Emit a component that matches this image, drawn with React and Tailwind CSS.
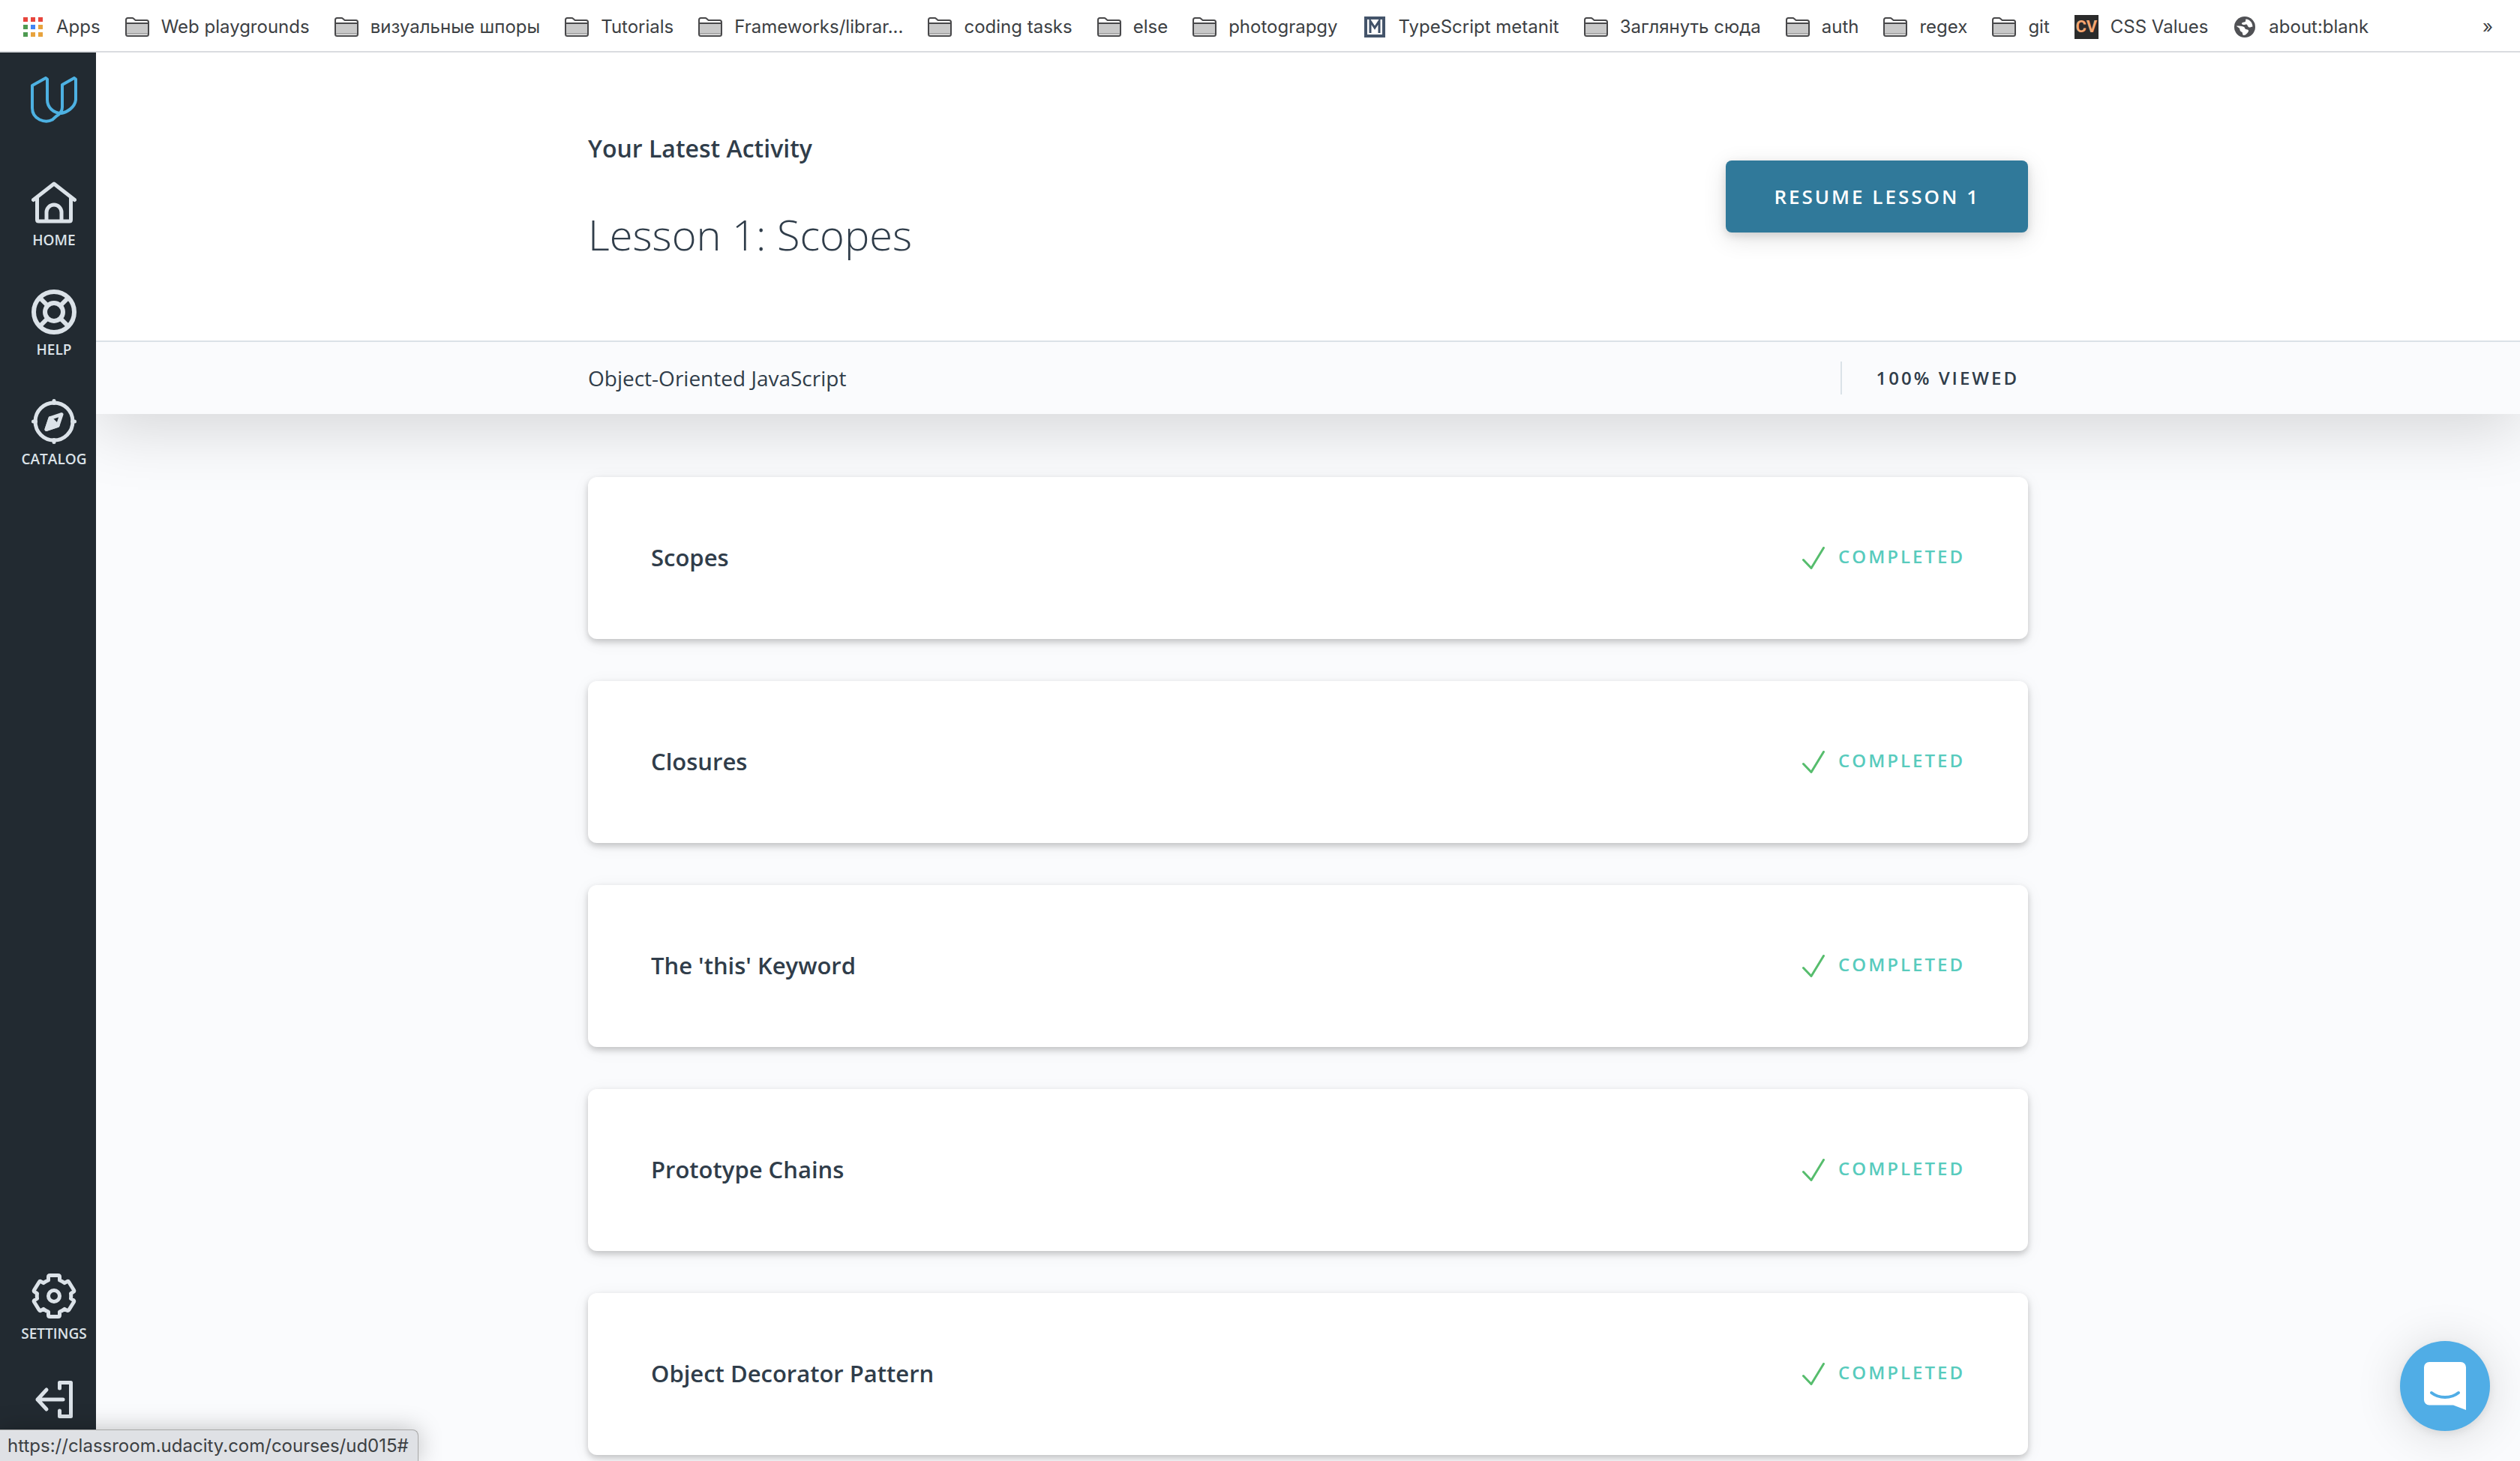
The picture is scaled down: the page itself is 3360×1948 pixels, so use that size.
const folder = (
  <svg viewBox="0 0 32 26" className="h-[26px] w-8 shrink-0" fill="none">
    <path d="M1 3.5C1 2 2 1 3.5 1h5.700c1 0 1.600.4 2.200 1.100L13.600 4H28.500C30 4 31 5 31 6.500V22.500C31 24 30 25 28.500 25H3.500C2 25 1 24 1 22.500Z" fill="#fff" stroke="#48484a" strokeWidth="2" />
    <path d="M2 9h28v14H2z" fill="#c8c8c8" />
    <path d="M2 21h28v2H2z" fill="#a9a9a9" />
    <path d="M2 8h28" stroke="#48484a" strokeWidth="2" />
  </svg>
);

const metanit = (
  <svg viewBox="0 0 32 28" className="h-7 w-8 shrink-0">
    <path d="M2 0h28v28H2z" fill="#44546a" />
    <path d="M6 4h20v20H6z" fill="#fff" />
    <path d="M10 22V6l6 9 6-9v16" fill="none" stroke="#3f5068" strokeWidth="3" />
  </svg>
);

const cssValues = (
  <span className="flex size-8 shrink-0 items-center justify-center bg-[#2b2b2b] font-['Roboto',sans-serif] text-[22px] leading-8 font-bold text-[#f5a671]">
    CV
  </span>
);

const globe = (
  <svg viewBox="0 0 32 28" className="h-7 w-8 shrink-0">
    <circle cx="16" cy="14" r="14" fill="#505155" />
    <path d="M5 12.500c4 0 8 0 10 1.500 1.500 1 1 2.500 2.500 3 1.500.500 3 0 3.500 1.500.400 1.500-1 3-2.500 4.500-1 1-2 2-4 2-2-.500-1-3-2-4-1-1-2.500-1-3-3-.300-1.500 0-2-1.500-3-1-.700-2-1-3-2.500zM17.500 3.500c-1 1.500.500 2.500-1 3.500-1.500.800-4 .500-4.500 2-.300 1.500 1.500 2 3 2 2 0 3-1 4 0 1.200 1.200 1 3 3 3.500 1.500.300 2.500-1 4.500-1-.300-5.500-3.500-9.500-9-10z" fill="#fff" />
  </svg>
);

const apps = (
  <svg viewBox="0 0 26 26" className="size-[26px] shrink-0">
    {["#e8453c", "#e8453c", "#e8453c", "#4e9a51", "#4285f4", "#e8a33d", "#4e9a51", "#e8a33d", "#e8a33d"].map((c, i) => (
      <rect key={i} x={(i % 3) * 10} y={Math.floor(i / 3) * 10} width="6" height="6" fill={c} />
    ))}
  </svg>
);

const bookmarks = [
  ["Web playgrounds", folder],
  ["визуальные шпоры", folder],
  ["Tutorials", folder],
  ["Frameworks/librar...", folder],
  ["coding tasks", folder],
  ["else", folder],
  ["photograpgy", folder],
  ["TypeScript metanit", metanit],
  ["Заглянуть сюда", folder],
  ["auth", folder],
  ["regex", folder],
  ["git", folder],
  ["CSS Values", cssValues],
  ["about:blank", globe],
];

function BookmarkBar() {
  return (
    <nav aria-label="Bookmarks" className="flex h-[70px] items-center gap-[33px] border-b-2 border-[#dadce0] bg-white pt-1 pr-9 pl-[31px] font-['Inter',sans-serif] text-[24px] whitespace-nowrap text-[#3c4043]">
      <a href="#apps" className="flex items-center gap-[18px]">{apps}Apps</a>
      {bookmarks.map(([label, icon]) => (
        <a key={label} href="#bookmark" className="flex items-center gap-4">{icon}{label}</a>
      ))}
      <button type="button" aria-label="More bookmarks" className="ml-auto">»</button>
    </nav>
  );
}

const icon = "size-[60px] fill-none stroke-[#dbe2e8] stroke-5";

const homeIcon = (
  <svg viewBox="0 0 60 60" className={icon} strokeLinecap="round" strokeLinejoin="round">
    <path d="M2.500 26.500 30 5l27.500 21.500" />
    <path d="M7.500 24V53c0 1.500.500 2 2 2h41c1.500 0 2-.500 2-2V24" />
    <path d="M20 54.500V43a10 10 0 0 1 20 0v11.500" />
  </svg>
);

const helpIcon = (
  <svg viewBox="0 0 60 60" className={icon}>
    <circle cx="30" cy="30" r="27" strokeWidth="6" />
    <circle cx="30" cy="30" r="12" strokeWidth="6" />
    <path d="m11 11 10.500 10.500M49 11 38.500 21.500M11 49l10.500-10.500M49 49 38.500 38.500" strokeWidth="6" />
  </svg>
);

const catalogIcon = (
  <svg viewBox="0 0 60 60" className={icon} strokeLinecap="round" strokeLinejoin="round">
    <circle cx="30" cy="30" r="25" />
    <path d="M30 2.500v3M30 54.500v3M2.500 30h3M54.500 30h3" />
    <path d="M40 20.500 25 25.500l-5 15 15-5z" />
    <path d="M25 25.500 35 35.500l-15 5z" fill="#dbe2e8" />
  </svg>
);

const settingsIcon = (
  <svg viewBox="0 0 60 60" className={icon} strokeLinejoin="round">
    <path d="M22.500 9V4.500c0-1.200.800-2 2-2h11c1.200 0 2 .800 2 2V9c2.500.900 4.600 2.100 6.500 3.700l3.200-1.900c1-.600 2.100-.300 2.700.700l6.500 10.500c.600 1 .300 2.100-.700 2.700l-3.200 2c.300 2.200.300 4.400 0 6.600l3.200 2c1 .600 1.300 1.700.700 2.700l-6.500 10.500c-.600 1-1.700 1.300-2.700.700L44 47.300c-1.900 1.600-4 2.800-6.500 3.700v4.500c0 1.200-.800 2-2 2h-11c-1.200 0-2-.800-2-2V51c-2.500-.900-4.600-2.100-6.500-3.700l-3.200 1.900c-1 .600-2.100.300-2.700-.700L3.600 38c-.600-1-.300-2.100.700-2.700l3.200-2c-.300-2.200-.300-4.400 0-6.600l-3.200-2c-1-.600-1.300-1.700-.700-2.700l6.500-10.500c.600-1 1.700-1.300 2.700-.700l3.200 1.900C17.900 11.100 20 9.900 22.500 9z" />
    <circle cx="30" cy="30" r="7.500" />
  </svg>
);

const exitIcon = (
  <svg viewBox="0 0 60 60" className={icon} strokeLinecap="round" strokeLinejoin="round">
    <path d="M37.500 15V7.500h15v45h-15V45" />
    <path d="M42 30H8M20 17 8 30l12 13" />
  </svg>
);

function NavItem({ label, children }) {
  return (
    <a href={"#" + label.toLowerCase()} className="flex flex-col items-center gap-1.5 text-[19px] leading-7 font-semibold text-[#dbe2e8]">
      {children}
      <span>{label}</span>
    </a>
  );
}

function Sidebar() {
  return (
    <nav aria-label="Main" className="flex w-32 shrink-0 flex-col items-center bg-[#222a31] pt-8 pb-[52px] pl-4">
      <a href="#udacity" aria-label="Udacity">
        <svg viewBox="0 0 62 62" className="size-[62px] fill-none stroke-[#4db1e2] stroke-4" strokeLinejoin="round">
          <path d="M2 12 20 2l2 1.500V31c0 10 8 18 19 18 7-1 18-8 19-18V3.500L58 2 42 11v30c0 6-3 9-8 12l-5 4.500C19 63 2 57 2 42z" />
        </svg>
      </a>
      <div className="mt-[76px] flex flex-col gap-[52px]">
        <NavItem label="HOME">{homeIcon}</NavItem>
        <NavItem label="HELP">{helpIcon}</NavItem>
        <NavItem label="CATALOG">{catalogIcon}</NavItem>
      </div>
      <div className="mt-auto flex flex-col items-center gap-11">
        <NavItem label="SETTINGS">{settingsIcon}</NavItem>
        <a href="#logout" aria-label="Log out">{exitIcon}</a>
      </div>
    </nav>
  );
}

const lessons = ["Scopes", "Closures", "The 'this' Keyword", "Prototype Chains", "Object Decorator Pattern"];

function LessonCard({ title }) {
  return (
    <li className="flex h-[216px] items-center justify-between rounded-xl bg-white px-[84px] pb-0.5 shadow-[0_4px_8px_rgba(0,0,0,0.2),0_4px_24px_rgba(0,0,0,0.06)]">
      <a href="#lesson" className="text-[31px] leading-10 font-semibold">{title}</a>
      <span className="flex items-center gap-[18px] pb-0.5 text-[24px] leading-8 font-semibold tracking-[3px] text-[#58cbbd]">
        <svg viewBox="0 0 30 30" className="mt-1 size-[30px] fill-none stroke-[#56bd6d] stroke-3" strokeLinecap="round" strokeLinejoin="round">
          <path d="M1.500 17.500 12 28.500 28.500 1.500" />
        </svg>
        COMPLETED
      </span>
    </li>
  );
}

export default function App() {
  return (
    <div className="relative flex h-screen flex-col overflow-hidden bg-[#fafbfd] font-['Open_Sans',sans-serif] text-[#303d4a]">
      <BookmarkBar />
      <div className="flex min-h-0 flex-1">
        <Sidebar />
        <main className="min-w-0 flex-1 overflow-hidden">
          <header className="shadow-[0_20px_80px_rgba(0,0,0,0.15)]">
            <div className="border-b-2 border-[#dbe2e8] bg-white">
              <div className="mx-auto flex h-96 max-w-[1920px] items-center justify-between">
                <div className="pt-1">
                  <p className="text-[32px] leading-10 font-semibold">Your Latest Activity</p>
                  <h1 className="mt-14 text-[56px] leading-[76px] font-light">Lesson 1: Scopes</h1>
                </div>
                <button type="button" className="h-24 rounded-lg bg-[#30799a] px-16 text-[26px] font-semibold tracking-[3px] text-white shadow-[0_8px_32px_rgba(0,0,0,0.12),0_4px_12px_rgba(0,0,0,0.12)]">
                  RESUME LESSON 1
                </button>
              </div>
            </div>
            <div className="mx-auto flex h-24 max-w-[1920px] items-center justify-between">
              <p className="text-[28px] leading-10">Object-Oriented JavaScript</p>
              <p className="border-l-2 border-[#dbe2e8] pr-3 pl-[46px] text-[24px] leading-[44px] font-semibold tracking-[3px]">100% VIEWED</p>
            </div>
          </header>
          <ul className="mx-auto mt-[84px] flex max-w-[1920px] flex-col gap-14">
            {lessons.map((title) => (
              <LessonCard key={title} title={title} />
            ))}
          </ul>
        </main>
      </div>
      <p className="absolute bottom-0 left-0 rounded-tr-lg border-t border-r border-[#a8a8a8] bg-[#dfe1e5] pr-3 pl-2.5 font-['Inter',sans-serif] text-[24px] leading-[41px] text-[#3c4043] shadow-[0_0_32px_rgba(0,0,0,0.25)]">
        https://classroom.udacity.com/courses/ud015#
      </p>
      <button type="button" aria-label="Open chat" className="absolute right-10 bottom-10 flex size-[120px] items-center justify-center rounded-full bg-[#50ade6] shadow-[0_4px_12px_rgba(0,0,0,0.08),0_4px_64px_rgba(0,0,0,0.14)]">
        <svg viewBox="0 0 56 64" className="h-16 w-14">
          <path d="M7 0h42a7 7 0 0 1 7 7v57l-17-6.500H7a7 7 0 0 1-7-7V7a7 7 0 0 1 7-7z" fill="#fff" />
          <path d="M10 41c10 8 26 8 36 0" fill="none" stroke="#50ade6" strokeWidth="4" strokeLinecap="round" />
        </svg>
      </button>
    </div>
  );
}
